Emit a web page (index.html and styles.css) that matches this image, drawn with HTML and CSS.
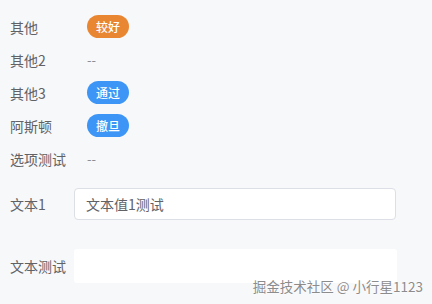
FILE: index.html
```html
<!DOCTYPE html>
<html>
<head>
<meta charset="utf-8">
<link rel="stylesheet" href="styles.css">
</head>
<body>
<div class="page">
  <div class="row"><span class="label">其他</span><span class="val"><span class="tag orange">较好</span></span></div>
  <div class="row"><span class="label">其他2</span><span class="val dash">--</span></div>
  <div class="row"><span class="label">其他3</span><span class="val"><span class="tag blue">通过</span></span></div>
  <div class="row"><span class="label">阿斯顿</span><span class="val"><span class="tag blue">撤旦</span></span></div>
  <div class="row"><span class="label">选项测试</span><span class="val dash">--</span></div>
  <div class="field f1"><span class="flabel">文本1</span><div class="input">文本值1测试</div></div>
  <div class="field f2"><span class="flabel">文本测试</span><div class="area"></div></div>
</div>
<div class="watermark">掘金技术社区 @ 小行星1123</div>
</body>
</html>
```
FILE: styles.css
```css
html, body { margin: 0; padding: 0; }
body {
  width: 432px; height: 304px; overflow: hidden;
  background: #f7f8fa;
  font-family: "Noto Sans CJK SC", "Noto Sans", sans-serif;
  color: #606266;
  position: relative;
}
.page { padding: 10px 10px 0 10px; }
.row { display: flex; align-items: center; height: 33px; font-size: 14px; }
.label { width: 77px; flex: none; }
.dash { font-size: 13px; color: #8a8d93; }
.tag {
  display: inline-flex; align-items: center; justify-content: center;
  width: 42px; height: 23px; border-radius: 12px;
  color: #fff; font-size: 12px; font-weight: 500;
}
.orange { background: #e98631; }
.blue { background: #3d95f5; }
.field { display: flex; align-items: center; font-size: 14px; }
.flabel { width: 64px; flex: none; }
.f1 { margin-top: 13px; }
.input {
  flex: none; width: 309px; height: 30px; border: 1px solid #dcdfe6; border-radius: 4px;
  background: #fff; display: flex; align-items: center; padding-left: 11px; color: #606266;
}
.f2 { margin-top: 29px; }
.area { flex: none; width: 323px; height: 34px; background: #fff; border-radius: 3px; }
.watermark {
  position: absolute; right: 9px; bottom: 8px;
  font-size: 13.5px; color: #8c8c8c;
  text-shadow: 0 0 2px #fff, 0 0 2px #fff;
}
```
